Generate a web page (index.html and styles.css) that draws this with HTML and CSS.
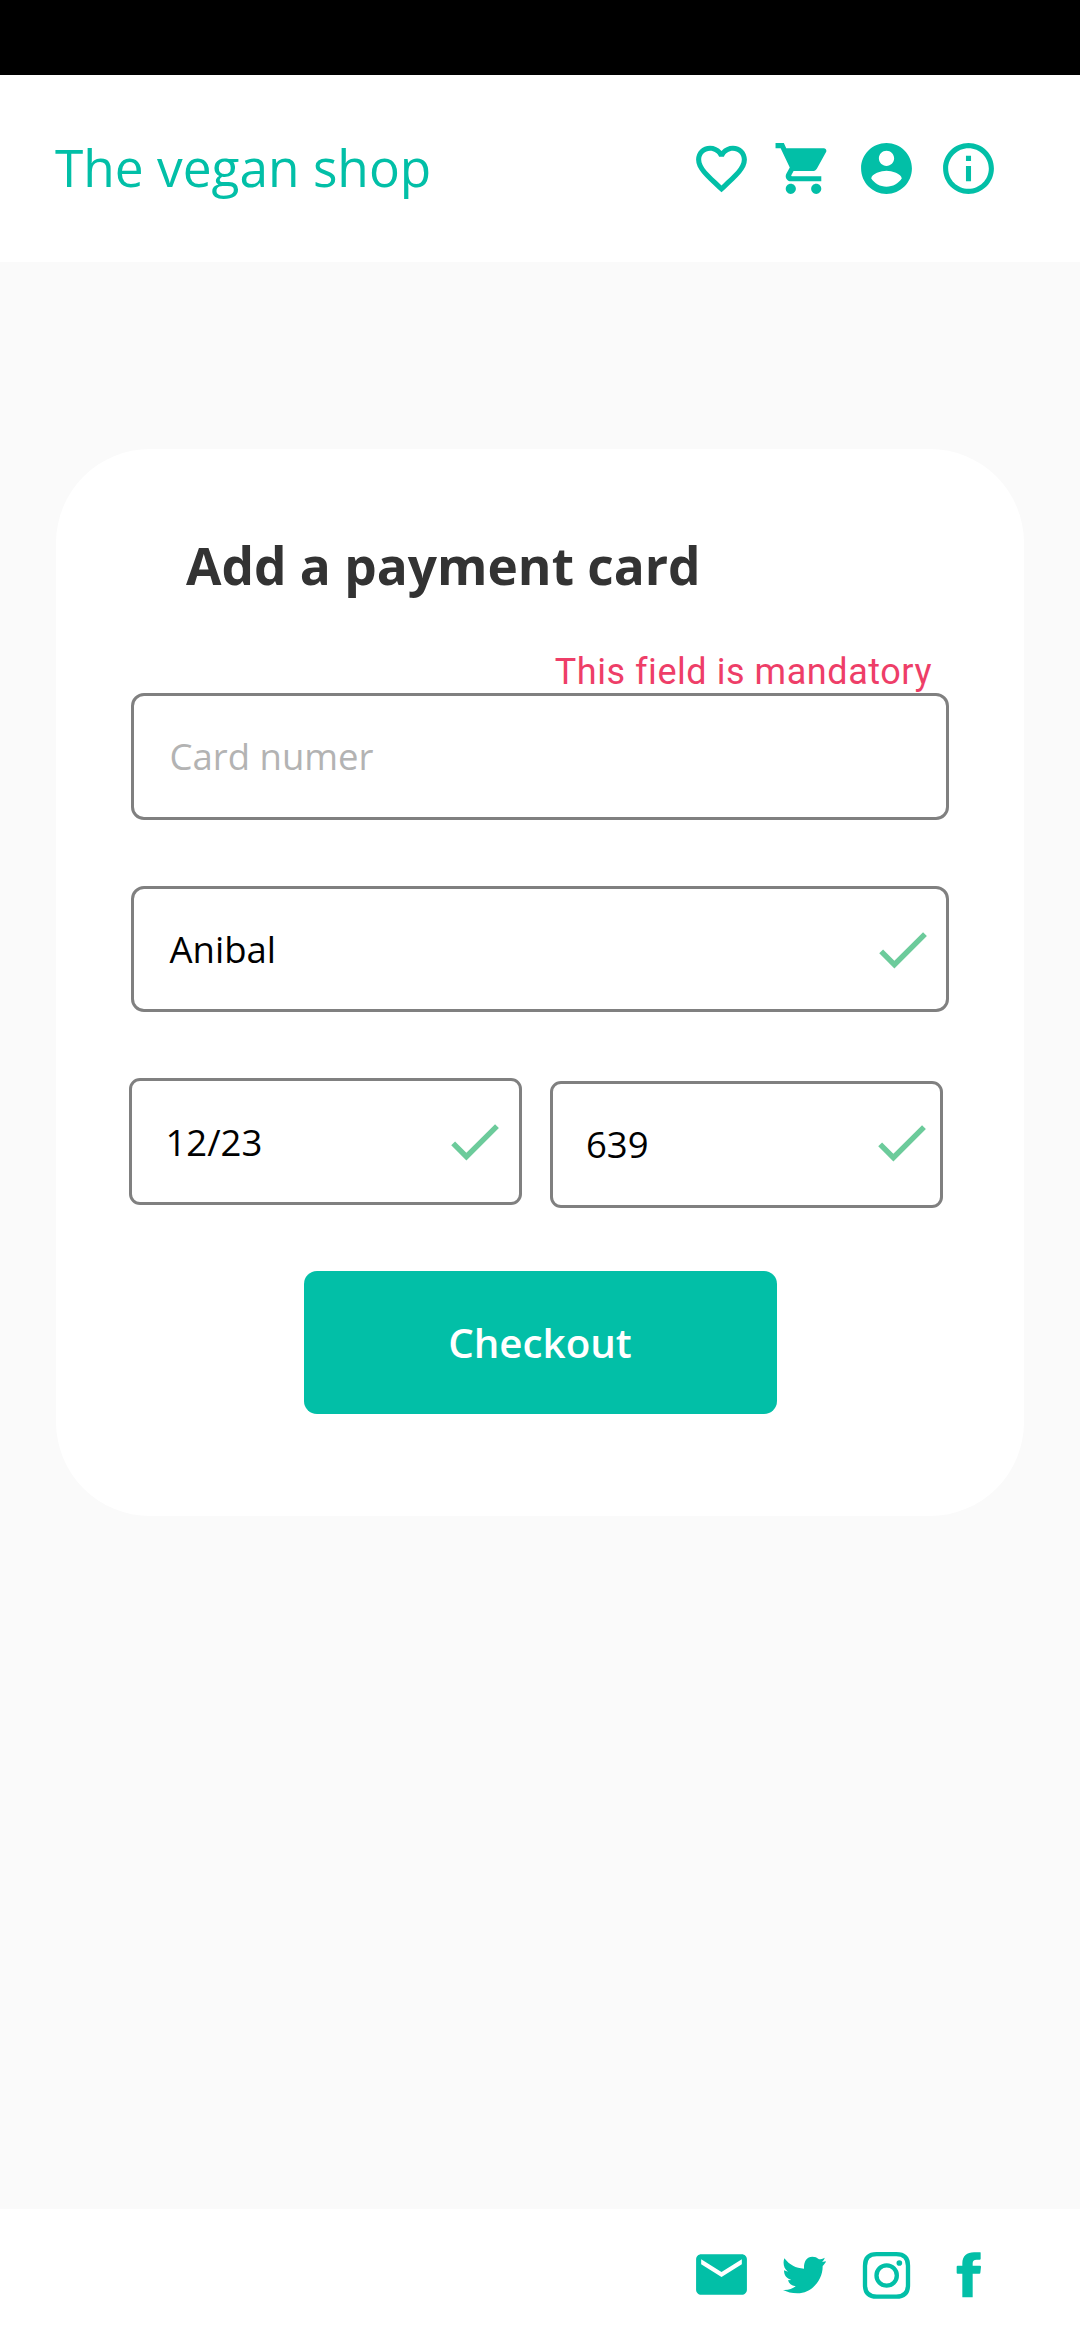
FILE: index.html
```html
<!DOCTYPE html>
<html lang="en">
<head>
<meta charset="utf-8">
<title>The vegan shop</title>
<link rel="stylesheet" href="styles.css">
</head>
<body>
<div class="screen">
  <div class="status-bar"></div>
  <header class="header">
    <div class="brand">The vegan shop</div>
    <nav class="icons">
      <svg class="icon" viewBox="0 0 24 24"><path d="M16.5 3c-1.74 0-3.41.81-4.5 2.09C10.91 3.81 9.24 3 7.5 3 4.42 3 2 5.42 2 8.5c0 3.78 3.4 6.86 8.55 11.54L12 21.35l1.45-1.32C18.6 15.36 22 12.28 22 8.5 22 5.42 19.58 3 16.5 3zm-4.4 15.55l-.1.1-.1-.1C7.14 14.24 4 11.39 4 8.5 4 6.5 5.5 5 7.5 5c1.54 0 3.04.99 3.57 2.36h1.87C13.46 5.99 14.96 5 16.5 5c2 0 3.5 1.5 3.5 3.5 0 2.89-3.14 5.74-7.9 10.05z"/></svg>
      <svg class="icon" viewBox="0 0 24 24"><path d="M7 18c-1.1 0-1.99.9-1.99 2S5.9 22 7 22s2-.9 2-2-.9-2-2-2zM1 2v2h2l3.6 7.59-1.35 2.45c-.16.28-.25.61-.25.96 0 1.1.9 2 2 2h12v-2H7.42c-.14 0-.25-.11-.25-.25l.03-.12.9-1.63h7.45c.75 0 1.41-.41 1.75-1.03l3.58-6.49c.08-.14.12-.31.12-.48 0-.55-.45-1-1-1H5.21l-.94-2H1zm16 16c-1.1 0-1.99.9-1.99 2s.89 2 1.99 2 2-.9 2-2-.9-2-2-2z"/></svg>
      <svg class="icon" viewBox="0 0 24 24"><path d="M12 2C6.48 2 2 6.48 2 12s4.48 10 10 10 10-4.48 10-10S17.52 2 12 2zm0 3c1.66 0 3 1.34 3 3s-1.34 3-3 3-3-1.34-3-3 1.34-3 3-3zm0 14.2c-2.5 0-4.71-1.28-6-3.22.03-1.99 4-3.08 6-3.08 1.99 0 5.97 1.09 6 3.08-1.29 1.94-3.5 3.22-6 3.22z"/></svg>
      <svg class="icon" viewBox="0 0 24 24"><path d="M11 7h2v2h-2zm0 4h2v6h-2zm1-9C6.48 2 2 6.48 2 12s4.48 10 10 10 10-4.48 10-10S17.52 2 12 2zm0 18c-4.41 0-8-3.59-8-8s3.59-8 8-8 8 3.59 8 8-3.59 8-8 8z"/></svg>
    </nav>
  </header>
  <main class="main">
    <section class="card">
      <h1 class="title">Add a payment card</h1>
      <div class="error">This field is mandatory</div>
      <div class="field"><span class="placeholder">Card numer</span></div>
      <div class="field field-name"><span>Anibal</span>
        <svg class="check" viewBox="0 0 24 24"><path d="M9 16.17L4.83 12l-1.42 1.41L9 19 21 7l-1.41-1.41z"/></svg></div>
      <div class="row">
        <div class="field field-date"><span>12/23</span>
          <svg class="check" viewBox="0 0 24 24"><path d="M9 16.17L4.83 12l-1.42 1.41L9 19 21 7l-1.41-1.41z"/></svg></div>
        <div class="field field-code"><span>639</span>
          <svg class="check" viewBox="0 0 24 24"><path d="M9 16.17L4.83 12l-1.42 1.41L9 19 21 7l-1.41-1.41z"/></svg></div>
      </div>
      <button class="checkout">Checkout</button>
    </section>
  </main>
  <footer class="footer">
    <nav class="icons">
      <svg class="icon" viewBox="0 0 24 24"><path d="M20 4H4c-1.1 0-1.99.9-1.99 2L2 18c0 1.1.9 2 2 2h16c1.1 0 2-.9 2-2V6c0-1.1-.9-2-2-2zm0 4l-8 5-8-5V6l8 5 8-5v2z"/></svg>
      <svg class="icon" viewBox="0 0 183 183"><path d="M34 43C50 63 68 73 93 74C92 52 101 38 118 38C126 38 132 40 138 46C144 46 149 44 155 41C154 46 151 50 147 53C151 54 155 53 159 52C157 58 153 62 149 66C150 107 118 148 73 148C56 148 43 144 30 138C46 139 58 135 68 127C55 125 48 119 45 109L55 108C41 104 33 94 33 79L45 83C32 73 29 57 34 43z"/></svg>
      <svg class="icon" viewBox="0 0 183 183"><path fill="none" stroke="currentColor" stroke-width="13" d="M62 30.5H121C145 30.5 156 42 156 65V123C156 146 145 158 121 158H62C38 158 27 146 27 123V65C27 42 38 30.5 62 30.5z"/><circle cx="92" cy="94.5" r="30.5" fill="none" stroke="currentColor" stroke-width="13"/><circle cx="130" cy="57" r="8.5"/></svg>
      <svg class="icon" viewBox="0 0 183 183"><path d="M73 160V89H59C57 89 56 88 56 86V68C56 66 57 65 59 65H73V58C73 36 87 25 108 25H126C128 25 128 26 128 28V44C128 46 127 47 125 47H116C107 47 104 51 104 58V65H126C128 65 129 66 129 68L127 86C127 88 126 89 124 89H104V160z"/></svg>
    </nav>
  </footer>
</div>
</body>
</html>
```
FILE: styles.css
```css
* { box-sizing: border-box; }
body { margin: 0; font-family: "Open Sans", "Noto Sans", sans-serif; background: #fafafa; color: #000; }
.screen { width: 1080px; height: 2340px; display: flex; flex-direction: column; }
.status-bar { height: 75px; background: #000; }
.header { height: 187px; background: #fff; display: flex; align-items: center; justify-content: space-between; padding: 0 81px 0 55px; color: #02bfa7; }
.brand { font-size: 51.4px; line-height: 70px; padding-bottom: 3px; }
.icons { display: flex; gap: 21.5px; }
.icon { display: block; width: 61px; height: 61px; fill: currentColor; }
.main { flex: 1; padding: 187px 56px 0; }
.card { height: 1067px; border-radius: 94px; background: #fff; padding: 81px 75px 0; display: flex; flex-direction: column; }
.title { margin: 0 0 0 55px; font-size: 51.4px; line-height: 70px; font-weight: 700; color: #333; }
.error { margin-top: 51px; padding-right: 17px; height: 42px; line-height: 43px; text-align: right; font-family: Roboto, sans-serif; font-size: 36px; letter-spacing: 0.55px; font-variant-ligatures: none; color: #ee3e68; }
.field { height: 127px; border: 3px solid #808080; border-radius: 13px; padding: 0 11px 0 35.5px; display: flex; align-items: center; justify-content: space-between; font-size: 36.5px; line-height: 50px; }
.field span { padding-bottom: 2px; }
.placeholder { color: #b3b3b3; }
.field-name { margin-top: 66px; height: 126px; }
.field-name span { padding-bottom: 1px; }
.row { display: flex; gap: 28px; margin: 66px 6px 0 -2px; }
.field-date, .field-code { width: 393px; border-radius: 11px; }
.field-date { padding: 0 12.5px 0 33.5px; }
.field-date span { padding-bottom: 0; }
.field-code { margin-top: 3px; padding: 0 6.5px 0 33px; }
.check { width: 65px; height: 65px; fill: #6ccb9b; }
.field-code .check { margin-bottom: 5px; }
.checkout { align-self: center; margin-top: 63px; width: 473px; height: 143px; border: 0; border-radius: 13px; background: #02bfa7; color: #fff; font: 600 40.3px/54px "Open Sans", sans-serif; }
.footer { height: 131px; background: #fff; display: flex; align-items: center; justify-content: flex-end; padding-right: 81px; color: #02bfa7; }
```
